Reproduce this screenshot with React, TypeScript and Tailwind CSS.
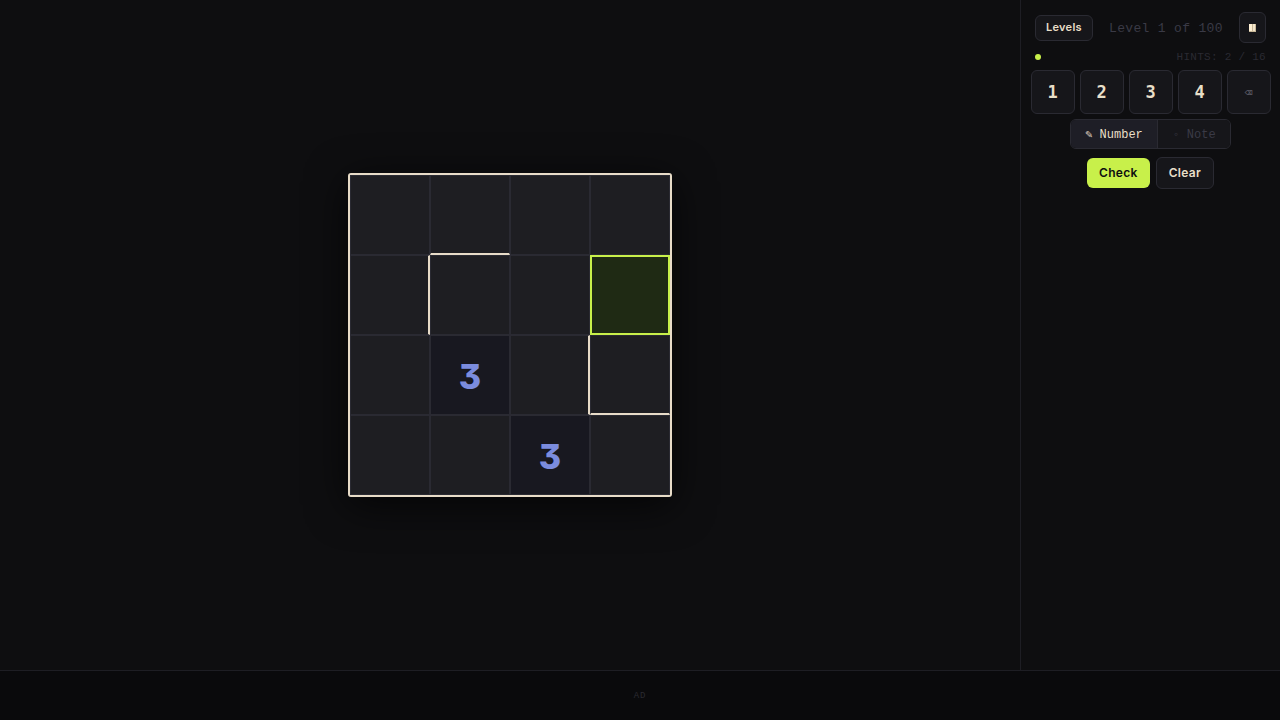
import { useState } from "react";
import clsx from "clsx";

const SIZE = 4;
const HINTS: Record<string, number> = { "2-1": 3, "3-2": 3 };

// walls sit on the right or bottom edge of a cell
const WALLS_RIGHT = ["1-0", "2-2"];
const WALLS_BOTTOM = ["0-1", "2-3"];

const App = () => {
  const [selected, setSelected] = useState("1-3");
  const [values, setValues] = useState<Record<string, number>>({});
  const [mode, setMode] = useState("number");

  const fillCell = (value: number) => {
    if (HINTS[selected] || mode !== "number") return;
    setValues({ ...values, [selected]: value });
  };

  const cells = Array.from(
    { length: SIZE * SIZE },
    (_, i) => `${Math.floor(i / SIZE)}-${i % SIZE}`
  );

  return (
    <div className="min-h-screen flex flex-col bg-[#0e0e10] text-[#e8dfc8] font-['Inter',sans-serif]">
      <div className="flex-1 flex">
        <main className="flex-1 flex items-center justify-center">
          <div className="grid grid-cols-4 border-2 border-[#e8dcc8] rounded-[3px] shadow-[0_8px_40px_rgba(0,0,0,0.7)]">
            {cells.map((id) => (
              <button
                key={id}
                aria-label={`Cell ${id}`}
                onClick={() => setSelected(id)}
                className={clsx(
                  "size-20 pt-0.5 flex items-center justify-center border border-[#2a2a32] text-[34px] font-extrabold text-[#7b8cde] [font-feature-settings:'cv09']",
                  WALLS_RIGHT.includes(id) && "border-r-2 border-r-[#e8dcc8]",
                  WALLS_BOTTOM.includes(id) && "border-b-2 border-b-[#e8dcc8]",
                  selected === id
                    ? "bg-[#1f2a14] outline-2 -outline-offset-2 outline-[#c8f04a]"
                    : HINTS[id]
                      ? "bg-[#181820]"
                      : "bg-[#1e1e22]"
                )}
              >
                {HINTS[id] || values[id] || ""}
              </button>
            ))}
          </div>
        </main>

        <aside className="w-[260px] border-l border-[#1e1e24] pt-3 flex flex-col items-center font-['DejaVu_Sans_Mono',monospace]">
          <div className="w-full px-3.5 flex items-center justify-between">
            <button className="h-[26px] px-2.5 rounded-md border border-[#2a2a32] bg-[#16161a] text-[11px] font-semibold tracking-wide font-['Inter',sans-serif]">
              Levels
            </button>
            <span className="pt-0.5 text-[13px] tracking-wide text-[#3a3a46] font-['Liberation_Mono',monospace]">
              Level 1 of 100
            </span>
            <button
              aria-label="Pause"
              className="w-[27px] h-[31px] flex items-center justify-center rounded-md border border-[#2a2a32] bg-[#16161a]"
            >
              <svg width="7" height="8" viewBox="0 0 7 8">
                <rect width="7" height="8" fill="#c9b898" />
                <rect width="3" height="7" fill="#fff0d4" />
                <rect x="4" width="2" height="7" fill="#f4e6cc" />
              </svg>
            </button>
          </div>

          <div className="w-full h-[27px] px-3.5 flex items-center justify-between">
            <span className="size-1.5 rounded-full bg-[#c8f04a]" />
            <span className="pt-0.5 text-[11px] tracking-wide text-[#2a2a32] font-['Liberation_Mono',monospace]">
              HINTS: 2 / 16
            </span>
          </div>

          <div className="flex gap-[5px]">
            {[1, 2, 3, 4].map((n) => (
              <button
                key={n}
                onClick={() => fillCell(n)}
                className="size-11 pt-0.5 rounded-md border border-[#2a2a32] bg-[#16161a] text-[17px] font-bold"
              >
                {n}
              </button>
            ))}
            <button
              aria-label="Erase"
              onClick={() => fillCell(0)}
              className="size-11 pt-0.5 rounded-md border border-[#2a2a32] bg-[#16161a] text-[13px] text-[#55555f]"
            >
              ⌫
            </button>
          </div>

          <div className="mt-[5px] w-[161px] h-[30px] flex rounded-md border border-[#2a2a32] overflow-hidden text-xs font-['Liberation_Mono','DejaVu_Sans_Mono',monospace]">
            <button
              onClick={() => setMode("number")}
              className={clsx(
                "w-[87px] pt-0.5 border-r border-[#2a2a32]",
                mode === "number" ? "bg-[#1e1e26]" : "bg-[#16161a] text-[#3a3a46]"
              )}
            >
              ✎ Number
            </button>
            <button
              onClick={() => setMode("note")}
              className={clsx(
                "flex-1 pt-0.5",
                mode === "note" ? "bg-[#1e1e26]" : "bg-[#16161a] text-[#3a3a46]"
              )}
            >
              ◦ Note
            </button>
          </div>

          <div className="mt-2 flex items-center gap-1.5 text-xs font-semibold tracking-wide font-['Inter',sans-serif]">
            <button className="h-[30px] px-3 rounded-md bg-[#c8f04a] text-[#0e0e10]">
              Check
            </button>
            <button
              onClick={() => setValues({})}
              className="h-8 px-3 rounded-md border border-[#2a2a32] bg-[#16161a]"
            >
              Clear
            </button>
          </div>
        </aside>
      </div>

      <footer className="h-[50px] pt-0.5 border-t border-[#1e1e24] bg-[#0a0a0c] flex items-center justify-center text-[9px] tracking-widest text-[#2a2a32] font-['Liberation_Mono',monospace]">
        AD
      </footer>
    </div>
  );
};

export default App;
